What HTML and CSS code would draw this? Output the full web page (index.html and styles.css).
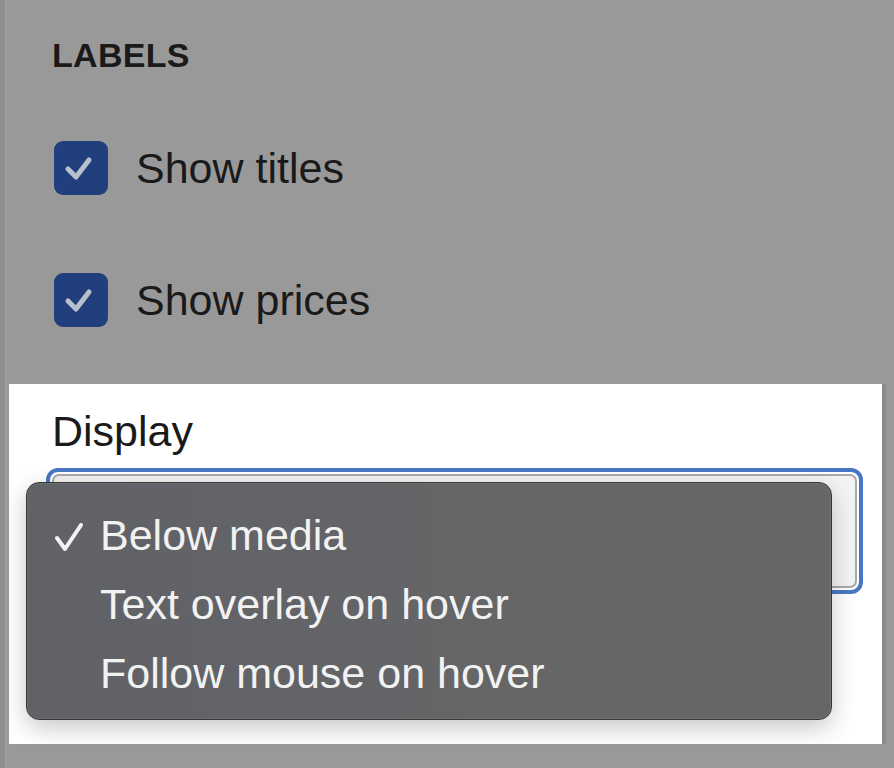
FILE: index.html
```html
<!DOCTYPE html>
<html>
<head>
<meta charset="utf-8">
<link rel="stylesheet" href="styles.css">
</head>
<body>
<div class="page">
  <div class="labels">
    <div class="heading">LABELS</div>
    <div class="check-row">
      <span class="box"><svg width="54" height="54" viewBox="0 0 54 54"><path d="M14 28 L22 36 L35 19" fill="none" stroke="#b9c0cd" stroke-width="5" stroke-linecap="round" stroke-linejoin="round"/></svg></span>
      <span class="check-label">Show titles</span>
    </div>
    <div class="check-row">
      <span class="box"><svg width="54" height="54" viewBox="0 0 54 54"><path d="M14 28 L22 36 L35 19" fill="none" stroke="#b9c0cd" stroke-width="5" stroke-linecap="round" stroke-linejoin="round"/></svg></span>
      <span class="check-label">Show prices</span>
    </div>
  </div>
  <div class="panel">
    <div class="field-label">Display</div>
    <div class="select-wrap">
      <div class="select-inner"></div>
      <div class="menu">
        <div class="item selected">
          <svg class="tick" width="28" height="28" viewBox="0 0 28 28"><path d="M2 15 L10 26 L26 2" fill="none" stroke="#f2f2f2" stroke-width="4" stroke-linecap="round" stroke-linejoin="round"/></svg>
          <span>Below media</span>
        </div>
        <div class="item"><span>Text overlay on hover</span></div>
        <div class="item"><span>Follow mouse on hover</span></div>
      </div>
    </div>
  </div>
</div>
</body>
</html>
```
FILE: styles.css
```css
html, body {
  margin: 0;
  padding: 0;
  background: #999999;
}
body {
  width: 894px;
  height: 768px;
  overflow: hidden;
  font-family: "Liberation Sans", Arial, sans-serif;
  color: #1b1b1b;
}
.page {
  height: 768px;
  border-left: 5px solid #8f8f8f;
  box-sizing: border-box;
  position: relative;
}
.page::before {
  content: "";
  display: block;
  position: absolute;
  left: 0;
  top: 0;
  bottom: 0;
  width: 2px;
  background: #a1a1a1;
}
.labels {
  padding: 35px 0 0 47px;
  height: 349px;
  box-sizing: border-box;
}
.heading {
  font-size: 34px;
  line-height: 40px;
  font-weight: 700;
  letter-spacing: 0.3px;
  color: #1a1a1a;
}
.check-row {
  display: flex;
  align-items: center;
  gap: 28px;
  height: 54px;
  margin-left: 2px;
}
.heading + .check-row {
  margin-top: 66px;
}
.check-row + .check-row {
  margin-top: 78px;
}
.box {
  width: 54px;
  height: 54px;
  border-radius: 9px;
  background: #213f7d;
  display: block;
  flex: none;
}
.box svg {
  display: block;
}
.check-label {
  font-size: 43px;
  line-height: 54px;
  color: #1a1a1a;
}
.panel {
  margin-top: 35px;
  margin-left: 4px;
  width: 877px;
  height: 360px;
  background: #ffffff;
  box-sizing: border-box;
  padding-top: 22px;
  position: relative;
  border-right: 4px solid #8c8c8c;
}
.field-label {
  font-size: 43px;
  line-height: 50px;
  padding-left: 43px;
  color: #1a1a1a;
}
.select-wrap {
  position: relative;
  margin-top: 12px;
  margin-left: 37px;
  width: 817px;
  height: 126px;
  box-sizing: border-box;
  border: 4px solid #4876c6;
  border-radius: 12px;
  padding: 2px;
}
.select-inner {
  height: 100%;
  box-sizing: border-box;
  border: 2px solid #a9a9a9;
  border-radius: 7px;
  background: #f3f3f3;
}
.menu {
  position: absolute;
  left: -24px;
  top: 10px;
  width: 806px;
  height: 238px;
  box-sizing: border-box;
  background: linear-gradient(90deg, #606267 0%, #636468 40%, #666666 60%, #666666 100%);
  border: 1.5px solid #363636;
  border-radius: 13px;
  padding-top: 18px;
  box-shadow: 0 8px 24px rgba(0, 0, 0, 0.22), 0 0 0 1px rgba(255,255,255,0.08) inset;
}
.item {
  position: relative;
  font-size: 43px;
  line-height: 69px;
  color: #f2f2f2;
  padding-left: 73px;
}
.tick {
  position: absolute;
  left: 28px;
  top: 22px;
}
```
